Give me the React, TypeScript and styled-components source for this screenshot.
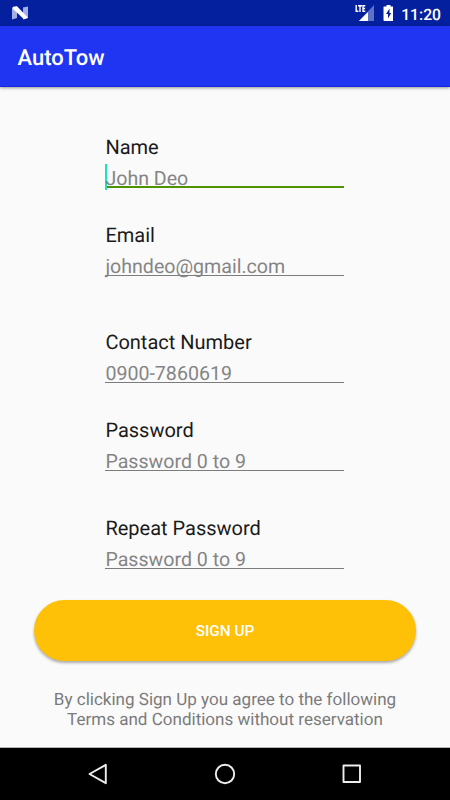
import React from "react";
import styled, { createGlobalStyle } from "styled-components";

const GlobalStyle = createGlobalStyle`
  * { box-sizing: border-box; }
  body { margin: 0; font-family: Roboto, sans-serif; text-rendering: geometricPrecision; }
`;

const Screen = styled.div`
  width: 450px;
  height: 800px;
  display: flex;
  flex-direction: column;
  background: #fafafa;
  overflow: hidden;
`;

const StatusBar = styled.header`
  height: 26px;
  flex: none;
  display: flex;
  align-items: center;
  justify-content: space-between;
  padding: 0 9px 0 12px;
  background: #05209e;
  color: #fff;
`;

const StatusIcons = styled.div`
  display: flex;
  align-items: center;
`;

const Clock = styled.span`
  margin-left: 8px;
  padding-top: 3px;
  font-size: 15.7px;
  font-weight: 500;
  line-height: 23px;
`;

const AppBar = styled.div`
  height: 61px;
  flex: none;
  display: flex;
  align-items: center;
  padding: 5px 17.5px 0;
  background: #2035f2;
  border-bottom: 1px solid #1526df;
  box-shadow: 0 1px 3px rgba(0, 0, 0, 0.4);
`;

const Title = styled.h1`
  margin: 0;
  color: #fff;
  font-size: 22px;
  font-weight: 500;
  line-height: 26px;
`;

const Form = styled.form`
  flex: 1;
  display: flex;
  flex-direction: column;
  padding: 47px 34px 0;
`;

const Field = styled.div<{ $gap: number }>`
  width: 239px;
  height: 54px;
  margin: 0 0 ${(p) => p.$gap}px 71.4px;
  display: flex;
  flex-direction: column;
`;

const Label = styled.label`
  color: #1a1a1a;
  font-size: 20px;
  line-height: 26px;
`;

const Entry = styled.div<{ $active?: boolean }>`
  height: 28px;
  display: flex;
  align-items: center;
  padding-top: ${(p) => (p.$active ? 12 : 11)}px;
  border-bottom: ${(p) => (p.$active ? "2px solid #4f9400" : "1px solid #7c7c7c")};
  color: #858585;
  font-size: 19.6px;
  line-height: 22px;
`;

const Caret = styled.i`
  width: 2px;
  height: 26px;
  margin: -4px -2px 0 0;
  background: #1de0bd;
`;

const SignUp = styled.button`
  height: 61px;
  flex: none;
  padding: 1px 0 0;
  border: 0;
  border-radius: 31px;
  background: #ffc107;
  box-shadow: 0 2px 3px rgba(0, 0, 0, 0.32);
  color: #fff;
  font: 500 15.3px/20px Roboto, sans-serif;
`;

const Terms = styled.p`
  margin: 29px 0 0;
  color: #7b7b7b;
  font-size: 17.05px;
  line-height: 20px;
  text-align: center;
`;

const NavBar = styled.nav`
  height: 53px;
  flex: none;
  display: grid;
  grid-template-columns: repeat(3, 127px);
  justify-content: center;
  align-items: center;
  justify-items: center;
  border-top: 1px solid #b5b5b5;
  background: #000;
`;

const NavIcon = styled.svg`
  width: 24px;
  height: 24px;
  fill: none;
  stroke: #eee;
  stroke-width: 1.9;
  stroke-linejoin: round;
`;

const fields = [
  { label: "Name", hint: "John Deo", gap: 34, active: true },
  { label: "Email", hint: "johndeo@gmail.com", gap: 53 },
  { label: "Contact Number", hint: "0900-7860619", gap: 34 },
  { label: "Password", hint: "Password 0 to 9", gap: 44 },
  { label: "Repeat Password", hint: "Password 0 to 9", gap: 31 },
];

export default function App() {
  return (
    <>
      <GlobalStyle />
      <Screen>
        <StatusBar>
          <svg width="16" height="14" viewBox="0 0 16 14">
            <path d="M0 1.5 5 .5V12l-5 1.5zM11 1.5l5-1V12l-5 1.5z" fill="#a4b0e4" />
            <path d="M1 .7 5 .2 16 11.8 12 13.2 1 3z" fill="#fff" />
          </svg>
          <StatusIcons>
            <svg width="20" height="16" viewBox="0 0 20 16">
              <path d="M4 16 19 0v16z" fill="#5f72c5" />
              <path d="M4 16 13 7v9z" fill="#fff" />
              <path d="M1.2 0v6.3H3.4M3 .8h4M5 .8v6.2M10.3 .8H8v5.5h2.3M8 3.5h2.1" fill="none" stroke="#fff" strokeWidth="1.4" />
            </svg>
            <svg width="18" height="16" viewBox="-8.5 0 18 16">
              <path d="M0 2q0-.5.5-.5H3V0h4v1.5h2.5q.5 0 .5.5v13q0 1-1 1H1q-1 0-1-1z" fill="#fff" />
              <path d="M6 3.5 2.5 9h2v4.5L7.7 8H6z" fill="#05209e" />
            </svg>
            <Clock>11:20</Clock>
          </StatusIcons>
        </StatusBar>
        <AppBar><Title>AutoTow</Title></AppBar>
        <Form>
          {fields.map((f) => (
            <Field key={f.label} $gap={f.gap}>
              <Label>{f.label}</Label>
              <Entry $active={f.active}>{f.active && <Caret />}{f.hint}</Entry>
            </Field>
          ))}
          <SignUp type="button">SIGN UP</SignUp>
          <Terms>By clicking Sign Up you agree to the following<br />Terms and Conditions without reservation</Terms>
        </Form>
        <NavBar>
          <NavIcon viewBox="0 0 24 24"><path d="M19.8 2.8v18.4L3.5 12z" /></NavIcon>
          <NavIcon viewBox="0 0 24 24"><circle cx="12" cy="12" r="9.2" /></NavIcon>
          <NavIcon viewBox="0 0 24 24"><path d="M3.5 3.5h16.5v16.5H3.5z" /></NavIcon>
        </NavBar>
      </Screen>
    </>
  );
}
